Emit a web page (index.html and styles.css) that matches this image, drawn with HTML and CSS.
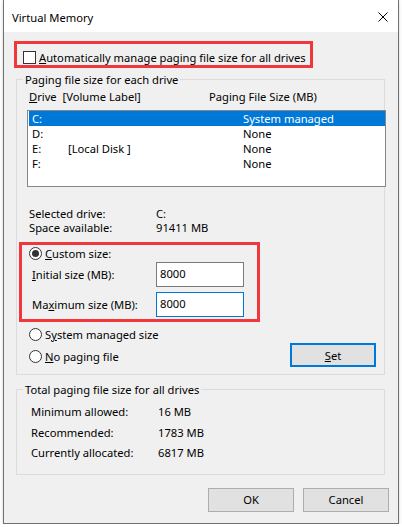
FILE: index.html
```html
<!DOCTYPE html>
<html lang="en">
<head>
<meta charset="utf-8">
<title>Virtual Memory</title>
<link rel="stylesheet" href="styles.css">
</head>
<body>
<div class="window">
  <div class="titlebar">
    <span class="title">Virtual Memory</span>
    <svg class="close" viewBox="0 0 10 10" width="10" height="10" aria-hidden="true">
      <path d="M0.5 0.5L9.5 9.5M9.5 0.5L0.5 9.5" stroke="#000" stroke-width="1" fill="none"/>
    </svg>
  </div>
  <div class="content">
    <div class="hl hl-auto">
      <div class="check-row"><span class="checkbox"></span><span><u>A</u>utomatically manage paging file size for all drives</span></div>
    </div>

    <fieldset class="group group-drives">
      <legend>Paging file size for each drive</legend>
      <div class="list-head"><span><u>D</u>rive&nbsp;&nbsp;[Volume Label]</span><span>Paging File Size (MB)</span></div>
      <div class="listbox">
        <div class="list-row selected"><span>C:</span><span></span><span>System managed</span></div>
        <div class="list-row"><span>D:</span><span></span><span>None</span></div>
        <div class="list-row"><span>E:</span><span>[Local Disk ]</span><span>None</span></div>
        <div class="list-row"><span>F:</span><span></span><span>None</span></div>
      </div>
      <div class="info">
        <span>Selected drive:</span><span>C:</span>
        <span>Space available:</span><span>91411 MB</span>
      </div>
      <div class="hl hl-custom">
        <div class="radio-row"><span class="radio checked"></span><span><u>C</u>ustom size:</span></div>
        <div class="size-row"><span class="size-label"><u>I</u>nitial size (MB):</span><input class="tb" type="text" value="8000"></div>
        <div class="size-row"><span class="size-label">Ma<u>x</u>imum size (MB):</span><input class="tb focused" type="text" value="8000"></div>
      </div>
      <div class="radio-row sys"><span class="radio"></span><span>S<u>y</u>stem managed size</span></div>
      <div class="bottom-row">
        <div class="radio-row"><span class="radio"></span><span><u>N</u>o paging file</span></div>
        <button class="btn default" type="button"><u>S</u>et</button>
      </div>
    </fieldset>

    <fieldset class="group group-total">
      <legend>Total paging file size for all drives</legend>
      <div class="totals">
        <span>Minimum allowed:</span><span>16 MB</span>
        <span>Recommended:</span><span>1783 MB</span>
        <span>Currently allocated:</span><span>6817 MB</span>
      </div>
    </fieldset>

    <div class="actions">
      <button class="btn" type="button">OK</button>
      <button class="btn" type="button">Cancel</button>
    </div>
  </div>
</div>
</body>
</html>
```
FILE: styles.css
```css
body {
  margin: 0;
  background: #fff;
  font-family: "Noto Sans", "DejaVu Sans", sans-serif;
  font-size: 11.2px;
  color: #000;
}

.window {
  margin-left: 3px;
  width: 396px;
  height: 524px;
  box-sizing: border-box;
  border: 1px solid #707070;
  border-top: 0;
  background: #f0f0f0;
  box-shadow: 0 1px 3px rgba(0, 0, 0, 0.18);
  display: flex;
  flex-direction: column;
}

.titlebar {
  flex: none;
  height: 32px;
  box-sizing: border-box;
  padding: 2px 10px 0 8px;
  background: #fff;
  display: flex;
  align-items: center;
  justify-content: space-between;
  line-height: 15px;
}

.close {
  display: block;
}

.content {
  display: flex;
  flex-direction: column;
  align-items: flex-start;
}

u {
  text-underline-offset: 1px;
}

.hl {
  border: 3px solid #f0373c;
  box-sizing: border-box;
}

.hl-auto {
  margin: 9px 0 0 10px;
  width: 299px;
  height: 27px;
  padding: 6px 0 0 6px;
}

.check-row {
  display: flex;
  align-items: center;
  gap: 3px;
  height: 15px;
  line-height: 15px;
  white-space: nowrap;
}

.checkbox {
  width: 13px;
  height: 13px;
  box-sizing: border-box;
  border: 1px solid #333;
  background: #fff;
  flex: none;
}

.group {
  margin: 4px 0 0 12px;
  width: 369px;
  min-width: 0;
  box-sizing: border-box;
  border: 1px solid #dcdcdc;
  padding: 0;
}

.group legend {
  margin-left: 6px;
  padding: 0 2px;
  line-height: 15px;
  height: 15px;
}

.group-drives {
  padding-bottom: 7px;
}

.list-head {
  display: grid;
  grid-template-columns: 180px auto;
  margin: 2px 0 0 12px;
  line-height: 15px;
}

.listbox {
  margin: 6px 0 0 10px;
  width: 359px;
  height: 77px;
  box-sizing: border-box;
  border: 1px solid #828790;
  background: #fff;
  padding: 0 0 0 1px;
}

.list-row {
  display: grid;
  grid-template-columns: 36px 175px auto;
  height: 15px;
  line-height: 15px;
  padding-left: 3px;
  white-space: nowrap;
}

.list-row.selected {
  background: #0078d7;
  color: #fff;
}

.info {
  display: grid;
  grid-template-columns: 127px auto;
  margin: 20px 0 0 12px;
  line-height: 14px;
}

.hl-custom {
  margin: 7px 0 0 2px;
  width: 241px;
  height: 80px;
  padding: 1px 0 0 7px;
}

.radio-row {
  display: flex;
  align-items: center;
  gap: 3px;
  height: 15px;
  line-height: 15px;
  white-space: nowrap;
}

.radio {
  position: relative;
  flex: none;
  width: 13px;
  height: 13px;
  box-sizing: border-box;
  border: 1px solid #333;
  border-radius: 50%;
  background: #fff;
}

.radio.checked::after {
  content: "";
  position: absolute;
  left: 2px;
  top: 2px;
  width: 7px;
  height: 7px;
  border-radius: 50%;
  background: #333;
}

.size-row {
  display: flex;
  align-items: center;
  margin: 1px 0 0 3px;
}

.size-row + .size-row {
  margin-top: 5px;
}

.size-label {
  width: 124px;
  line-height: 15px;
  white-space: nowrap;
}

.tb {
  width: 88px;
  height: 25px;
  box-sizing: border-box;
  margin: 0;
  border: 1px solid #7a7a7a;
  padding: 0 3px 3px;
  font: inherit;
  color: #000;
  background: #fff;
  outline: none;
}

.tb.focused {
  border-color: #0078d7;
}

.radio-row.sys {
  margin: 5px 0 0 12px;
}

.bottom-row {
  display: flex;
  justify-content: space-between;
  align-items: flex-start;
  margin: 1px 8px 0 12px;
}

.bottom-row .radio-row {
  margin-top: 6px;
}

.btn {
  width: 86px;
  height: 24px;
  box-sizing: border-box;
  margin: 0;
  padding: 0;
  border: 1px solid #adadad;
  background: #e1e1e1;
  font: inherit;
  color: #000;
  line-height: 15px;
}

.btn.default {
  border: 2px solid #0078d7;
}

.group-total {
  margin-top: 7px;
  padding-bottom: 10px;
}

.totals {
  display: grid;
  grid-template-columns: 127px auto;
  margin: 5px 0 0 14px;
  line-height: 20.5px;
}

.actions {
  align-self: stretch;
  display: flex;
  justify-content: flex-end;
  gap: 9px;
  margin: 13px 9px 0 0;
}
```
